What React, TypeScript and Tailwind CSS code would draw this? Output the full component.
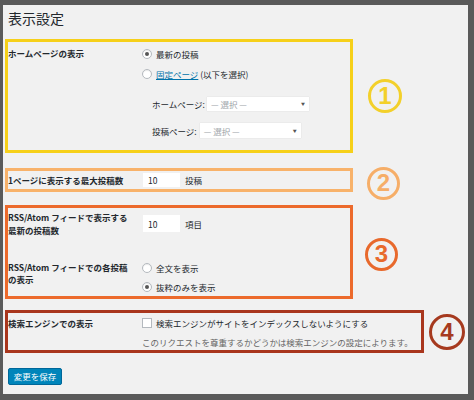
import React from 'react'

const FONT = { fontFamily: '"Noto Sans CJK JP", "Noto Sans", sans-serif' }

function Radio({ checked }: { checked?: boolean }) {
    return (
        <span className="w-[10px] h-[10px] rounded-full border border-[#b4b9be] bg-white flex items-center justify-center shrink-0 shadow-[inset_0_1px_1px_rgba(0,0,0,0.08)]">
            {checked && <span className="w-[4px] h-[4px] rounded-full bg-[#555]" />}
        </span>
    )
}

function Select({ width }: { width: string }) {
    return (
        <div className={`${width} h-full bg-white shadow-[0_0_1px_rgba(0,0,0,0.15)] flex items-center justify-between pl-[4px] pr-[4px]`}>
            <span className="text-[#a0a5aa]">— 選択 —</span>
            <span className="text-[4px] leading-none text-[#555]">▼</span>
        </div>
    )
}

function Badge({ n, color, className }: { n: string; color: string; className: string }) {
    return (
        <div
            className={`rounded-full border-[3px] flex items-center justify-center shrink-0 ${className}`}
            style={{ borderColor: color, color }}
        >
            <span className="text-[24px] font-bold leading-none" style={{ fontFamily: '"Liberation Sans", Arial, sans-serif' }}>
                {n}
            </span>
        </div>
    )
}

export default function App() {
    return (
        <div
            className="w-[474px] h-[400px] bg-[#5a5a5a] pt-[5px] pl-[3px] pr-[6px] pb-[6px] text-[8.5px] text-[#23282d] leading-[14px]"
            style={FONT}
        >
            <div className="h-full bg-[#f1f1f1] pl-[2px] flex flex-col">
                {/* title */}
                <div className="h-[34px] pt-[3px] pl-[3px] text-[14px] leading-[20px]">表示設定</div>

                {/* 1: home page display */}
                <div className="flex items-center">
                    <div className="flex w-[348px] h-[114px] border-[3px] border-[#f6d01a]">
                        <div className="w-[134px] pt-[4px] font-bold">ホームページの表示</div>
                        <div className="flex flex-col pt-[5px]">
                            <div className="h-[14px] flex items-center gap-[4px]">
                                <Radio checked />
                                <span>最新の投稿</span>
                            </div>
                            <div className="h-[14px] mt-[6px] flex items-center gap-[4px]">
                                <Radio />
                                <span>
                                    <span className="text-[#0073aa] underline">固定ページ</span> (以下を選択)
                                </span>
                            </div>
                            <div className="h-[14px] mt-[16px] pl-[10px] flex items-center gap-[2px]">
                                <span>ホームページ:</span>
                                <Select width="w-[102px]" />
                            </div>
                            <div className="h-[15px] mt-[12px] pl-[10px] flex items-center gap-[3px]">
                                <span>投稿ページ:</span>
                                <Select width="w-[101px]" />
                            </div>
                        </div>
                    </div>
                    <Badge n="1" color="#f3d02a" className="w-[34px] h-[34px] ml-[15px]" />
                </div>

                {/* 2: posts per page */}
                <div className="flex items-center h-[24px] mt-[15px]">
                    <div className="flex items-center w-[348px] h-[24px] border-[3px] border-[#f8b26a]">
                        <div className="w-[134px] font-bold">1ページに表示する最大投稿数</div>
                        <div className="flex items-center">
                            <div className="w-[37px] h-[14px] ml-[1px] bg-white pl-[5px] flex items-center">10</div>
                            <span className="ml-[5px]">投稿</span>
                        </div>
                    </div>
                    <Badge n="2" color="#f6ae68" className="w-[33px] h-[33px] ml-[14px] mt-[6px]" />
                </div>

                {/* 3: feeds */}
                <div className="flex items-center mt-[13px]">
                    <div className="flex flex-col w-[348px] h-[94px] border-[3px] border-[#ec6a2c]">
                        <div className="flex h-[40px]">
                            <div className="w-[134px] pt-[3px] font-bold leading-[13px] whitespace-nowrap">
                                RSS/Atom フィードで表示する
                                <br />
                                最新の投稿数
                            </div>
                            <div className="flex items-center pt-[7px] h-[24px]">
                                <div className="w-[37px] h-[17px] ml-[1px] bg-white pl-[5px] flex items-center">10</div>
                                <span className="ml-[5px]">項目</span>
                            </div>
                        </div>
                        <div className="flex">
                            <div className="w-[134px] pt-[13px] font-bold leading-[12px] whitespace-nowrap">
                                RSS/Atom フィードでの各投稿
                                <br />
                                の表示
                            </div>
                            <div className="flex flex-col pt-[13px]">
                                <div className="h-[14px] flex items-center gap-[4px]">
                                    <Radio />
                                    <span>全文を表示</span>
                                </div>
                                <div className="h-[14px] mt-[5px] flex items-center gap-[4px]">
                                    <Radio checked />
                                    <span>抜粋のみを表示</span>
                                </div>
                            </div>
                        </div>
                    </div>
                    <Badge n="3" color="#e8692c" className="w-[33px] h-[33px] ml-[12px] mt-[4px]" />
                </div>

                {/* 4: search engine visibility */}
                <div className="flex items-center mt-[11px]">
                    <div className="flex w-[419px] h-[43px] border-[3px] border-[#a9361d]">
                        <div className="w-[134px] pt-[3px] font-bold">検索エンジンでの表示</div>
                        <div className="flex flex-col pt-[3px]">
                            <div className="h-[14px] flex items-center gap-[4px]">
                                <span className="w-[10px] h-[10px] border border-[#b4b9be] bg-white shrink-0" />
                                <span>検索エンジンがサイトをインデックスしないようにする</span>
                            </div>
                            <div className="h-[14px] mt-[5px] text-[#666]">
                                このリクエストを尊重するかどうかは検索エンジンの設定によります。
                            </div>
                        </div>
                    </div>
                    <Badge n="4" color="#a63a1f" className="w-[36px] h-[36px] ml-[5px]" />
                </div>

                {/* save */}
                <div className="mt-[15px] ml-[3px]">
                    <button className="w-[54px] h-[17px] bg-[#0085ba] border border-[#006799] rounded-[2px] text-white text-[8.5px] leading-none flex items-center justify-center">
                        変更を保存
                    </button>
                </div>
            </div>
        </div>
    )
}
